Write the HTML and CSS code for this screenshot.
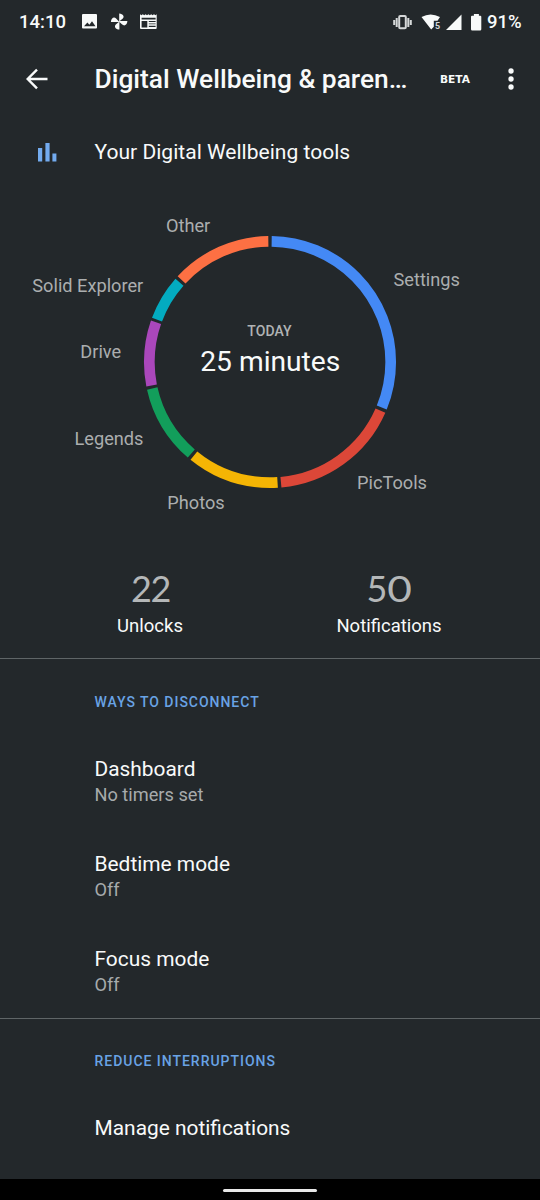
FILE: index.html
```
<!DOCTYPE html>
<html lang="en">
<head>
<meta charset="utf-8">
<title>Digital Wellbeing</title>
<link rel="stylesheet" href="styles.css">
</head>
<body>
<div class="screen">
  <header class="status">
    <span class="clock">14:10</span>
    <svg class="notif-icons" width="80" height="18" viewBox="0 0 80 18">
      <path fill-rule="evenodd" d="M2 1h13q1 0 1 1v12.500q0 1-1 1h-13q-1 0-1-1v-12.500q0-1 1-1zM3 13.200h11.500l-3.500-5-2.600 3.500-2-2.300z"/>
      <path d="M38.200 8.700V.4c4 .3 5.500 3 3.600 5.200l-3 2.400h7.600c-.3 4-3 5.500-5.200 3.600l-2.800-2.600v7.600c-4-.3-5.500-3-3.600-5.200l3-2.400h-7.900c.3-4 3-5.500 5.200-3.600z"/>
      <path fill-rule="evenodd" d="M59 1.200l1.400 1.100 1.400-1.100 1.400 1.100 1.400-1.100 1.400 1.100 1.400-1.100 1.400 1.100 1.400-1.100 1.400 1.100 1.400-1.100 1.400 1.100 1.300-1.100V15q0 1-1 1H60q-1 0-1-1zM60.600 8v6.400h5.700V8zM60.600 4.800v1.700h14V4.800zM67.800 8v1h6.800V8zM67.800 10.500v.700h6.800v-.700zM67.800 12.800v1.200h6.800v-1.200z"/>
    </svg>
    <svg class="system-icons" width="92" height="20" viewBox="0 0 92 20">
      <g fill="none" stroke="#d5d8d9" stroke-width="2">
        <path d="M1.200 8v5M3.700 6v9M17.800 8v5M15.300 6v9"/>
        <rect x="6.200" y="3.900" width="6.600" height="12.400" rx="1" stroke-width="2"/>
      </g>
      <path d="M28.500 5q9-5 18.500 0l-2.500 3.700h-3.700v6l-2.600 2.900z"/>
      <text class="wifi-band" x="42" y="16.500">5</text>
      <path d="M68.500 2.500v15.500H53z"/>
      <path d="M79 3.800h1.900V2.100h5v1.700h1.400q1 0 1 1v12.500q0 1.200-1.200 1.200h-7.900q-1.200 0-1.200-1.200V4.800q0-1 1-1z"/>
    </svg>
    <span class="battery">91%</span>
  </header>

  <div class="appbar">
    <svg class="back" width="24" height="24" viewBox="0 0 24 24"><path d="M22.500 12H3M12 2.700 2.700 12l9.300 9.300"/></svg>
    <h1 class="title">Digital Wellbeing &amp; paren…</h1>
    <svg class="beta" width="34" height="14" viewBox="0 0 34 14"><text x="0" y="11" textLength="30" lengthAdjust="spacingAndGlyphs">BETA</text></svg>
    <svg class="more" width="8" height="24" viewBox="0 0 8 24"><circle cx="4" cy="4" r="2.700"/><circle cx="4" cy="12" r="2.700"/><circle cx="4" cy="20" r="2.700"/></svg>
  </div>

  <div class="tools">
    <svg class="bars" width="22" height="20" viewBox="0 0 22 20"><path d="M1 6h4.200v13.500H1zM8.400 1h4.200v18.500H8.400zM15.400 11.500h4v8h-4z"/></svg>
    <span class="tools-label">Your Digital Wellbeing tools</span>
  </div>

  <svg class="usage" width="540" height="340" viewBox="0 200 540 340">
    <g class="ring" transform="rotate(-90 270 362)">
      <circle cx="270" cy="362" r="120.700" pathLength="360" stroke="#4489f5" stroke-dasharray="111.400 360" stroke-dashoffset="-0.800"/>
      <circle cx="270" cy="362" r="120.700" pathLength="360" stroke="#dc4738" stroke-dasharray="61.000 360" stroke-dashoffset="-113.800"/>
      <circle cx="270" cy="362" r="120.700" pathLength="360" stroke="#f5b504" stroke-dasharray="42.700 360" stroke-dashoffset="-176.400"/>
      <circle cx="270" cy="362" r="120.700" pathLength="360" stroke="#129e5b" stroke-dasharray="36.600 360" stroke-dashoffset="-220.700"/>
      <circle cx="270" cy="362" r="120.700" pathLength="360" stroke="#aa47bb" stroke-dasharray="30.400 360" stroke-dashoffset="-258.800"/>
      <circle cx="270" cy="362" r="120.700" pathLength="360" stroke="#03abc0" stroke-dasharray="20.800 360" stroke-dashoffset="-290.600"/>
      <circle cx="270" cy="362" r="120.700" pathLength="360" stroke="#fd7043" stroke-dasharray="46.300 360" stroke-dashoffset="-312.900"/>
    </g>
    <g class="app-labels">
      <text x="166" y="232.400">Other</text>
      <text x="32.300" y="292">Solid Explorer</text>
      <text x="80.300" y="357.500">Drive</text>
      <text x="74.500" y="444.500">Legends</text>
      <text x="167.300" y="509">Photos</text>
      <text x="357" y="489">PicTools</text>
      <text x="393.500" y="286.400">Settings</text>
    </g>
    <text class="today" x="269.500" y="336">TODAY</text>
    <text class="total" x="270.300" y="371">25 minutes</text>
  </svg>

  <div class="stats">
    <div class="stat"><span class="count">22</span><span class="stat-label">Unlocks</span></div>
    <div class="stat"><span class="count fifty">5<span class="wide">0</span></span><span class="stat-label">Notifications</span></div>
  </div>

  <section class="group">
    <h2 class="heading">WAYS TO DISCONNECT</h2>
    <div class="item"><div class="name">Dashboard</div><div class="value">No timers set</div></div>
    <div class="item"><div class="name">Bedtime mode</div><div class="value">Off</div></div>
    <div class="item"><div class="name">Focus mode</div><div class="value">Off</div></div>
  </section>
  <section class="group last">
    <h2 class="heading">REDUCE INTERRUPTIONS</h2>
    <div class="item"><div class="name">Manage notifications</div></div>
  </section>
  <div class="navbar"><div class="pill"></div></div>
</div>
</body>
</html>
```
FILE: styles.css
```
* { box-sizing: border-box; }
body { margin: 0; background: #23282b; font-family: Roboto, sans-serif; color: #f8fafa; }
svg { display: block; flex: none; fill: #f8fafa; }
.screen { width: 540px; height: 1200px; display: flex; flex-direction: column; overflow: hidden; white-space: nowrap; }

.status { height: 43px; flex: none; display: flex; align-items: center; padding: 1px 18px 0 19px; }
.clock, .battery { font-size: 18.500px; font-weight: 500; line-height: 22px; }
.clock { width: 62px; }
.system-icons { margin-left: auto; margin-right: 2px; }
.battery { width: 35px; }
.wifi-band { font: 700 9px Roboto, sans-serif; fill: #d5d8d9; }

.appbar { height: 72px; flex: none; display: flex; align-items: center; padding: 0 25px; }
.back { fill: none; stroke: #f8fafa; stroke-width: 2.400; }
.title { margin: 0 0 0 45.500px; width: 345.500px; font-size: 26.350px; line-height: 32px; font-weight: 500; }
.beta text { font: 700 11px "DejaVu Sans", sans-serif; }
.more { margin-left: auto; }

.tools { height: 85px; flex: none; display: flex; align-items: flex-start; padding: 24px 0 0 37px; }
.bars { margin-top: 3px; fill: #73abef; }
.tools-label { margin-left: 35.500px; font-size: 21.050px; line-height: 26px; }

.usage { height: 340px; }
.ring { fill: none; stroke-width: 10.700; }
.app-labels { font-size: 18.200px; fill: #abaeaf; }
.today { font-size: 14px; font-weight: 500; fill: #b0b3b4; text-anchor: middle; letter-spacing: .1px; }
.total { font-size: 28.200px; text-anchor: middle; }

.stats { flex: none; height: 118px; display: flex; padding: 28px 31.500px 0 30.500px; }
.stat { flex: 1; display: flex; flex-direction: column; align-items: center; }
.count { font: 36px/40px Lato, sans-serif; color: #b4b7b8; letter-spacing: -1.500px; padding-left: 1px; }
.fifty { margin-right: 4px; }
.wide { display: inline-block; transform: scaleX(1.180); margin-left: 3px; }
.stat-label { margin-top: 6px; font-size: 18.500px; line-height: 24px; }

.group { flex: none; height: 360px; border-top: 1px solid #5f6567; padding: 33px 0 0 94.500px; }
.group.last { height: 161px; padding-top: 32px; }
.heading { margin: 0 0 44px; font-size: 14px; line-height: 20px; font-weight: 500; letter-spacing: .970px; color: #69a3e5; }
.item { height: 95px; }
.name { font-size: 20.900px; line-height: 26px; }
.value { font-size: 18.200px; line-height: 26px; color: #a7abac; }

.navbar { flex: 1; background: #000; display: flex; justify-content: center; padding-top: 10px; }
.pill { width: 94px; height: 3px; border-radius: 2px; background: #e8e8e8; }
```
